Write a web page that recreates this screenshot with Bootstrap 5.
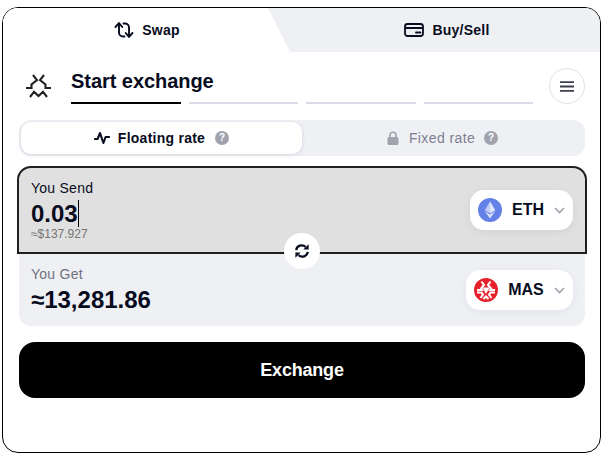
<!DOCTYPE html>
<html lang="en">
<head>
<meta charset="utf-8">
<title>Swap</title>
<link rel="stylesheet" href="https://cdn.jsdelivr.net/npm/bootstrap@5.3.0/dist/css/bootstrap.min.css">
<style>
html,body{margin:0;height:456px;overflow:hidden;background:#fff}
body{padding:7px 2px 2px;font-family:"Liberation Sans",Arial,sans-serif;color:#080c1e}
.wdg{width:599px;height:446px;border:1px solid #000;border-radius:16px;overflow:hidden;background:#fff}
.tabbar{height:44px;background:#eff0f4}
.tab-on{width:288px;background:#fff;clip-path:polygon(0 0,265px 0,287px 44px,0 44px)}
.tab-off{padding-left:3px}
.tabtxt{font-size:14px;font-weight:700;letter-spacing:.25px}
.bodyarea{padding:16px 15px 0 16px}
.logoicon{width:28px;height:28px;margin:4px 0 0 6px}
.head{height:36px}
.stepwrap{width:462px;margin-left:18px}
.steptitle{font-size:20px;font-weight:700;line-height:24px;margin-top:1px;padding-bottom:9px;letter-spacing:-.05px}
.steprow{gap:8px}
.stepbar{height:2px;background:#d9dbe6;flex:1 1 0}
.stepbar.on{background:#000}
.menuround{width:36px;height:36px;border:1px solid #dfe0e9;border-radius:50%;background:#fff;padding:0}
.ratebox{height:36px;background:#eff0f4;border-radius:12px;padding:2px;margin-top:16px}
.rate-on{width:281px;background:#fff;border-radius:10px;box-shadow:0 1px 4px rgba(30,35,70,.12);font-size:14px;font-weight:700;letter-spacing:.25px}
.rate-off{font-size:14px;color:#7d7f91;letter-spacing:.4px}
.qmark{width:14px;height:14px;border-radius:50%;background:#a1a2ad;color:#fff;font-size:10px;font-weight:700;line-height:14px;text-align:center;letter-spacing:0;margin-left:2px}
.rate-off .qmark{margin-left:1px}
.lockico{margin-right:2px}
.swapbox{margin-top:10px}
.sendpane{height:88px;margin:0 -2px;background:#e0e0e0;border:2px solid #1f1f1f;border-radius:14px 14px 0 0;padding:0 12px 0 12px}
.getpane{height:72px;background:#eff0f4;border-radius:0 0 12px 12px;padding:0 12px}
.lab{font-size:14px;line-height:16px;letter-spacing:.25px}
.lab-muted{color:#6f7180}
.send-lab{margin-top:12px}
.val-send{font-size:24px;font-weight:700;line-height:28px;margin-top:4px}
.caret-bar{display:inline-block;width:1px;height:27px;background:#000;vertical-align:top}
.usd{font-size:12px;line-height:13px;color:#747474;margin-top:0}
.val-get{font-size:24px;font-weight:700;line-height:28px;margin-top:4px}
.coinpill{height:40px;background:#fff;border-radius:14px;box-shadow:0 2px 8px rgba(30,35,70,.06);font-size:16px;font-weight:700}
.pill-eth{width:103px;padding:0 8px;margin-top:22px}
.pill-mas{width:107px;padding:0 8px;margin-top:16px}
.get-lab{margin-top:12px}
.coinicon{width:24px;height:24px}
.swapround{width:36px;height:36px;background:#fff;border-radius:50%;left:265px;top:67px;z-index:2}
.gobtn{height:56px;margin-top:16px;background:#000;border:0;border-radius:16px;font-size:18px;font-weight:700;color:#fff;width:100%;letter-spacing:-.2px}
.gobtn:hover{background:#000;color:#fff}
</style>
</head>
<body>
<div class="wdg">
  <div class="tabbar d-flex">
    <div class="tab-on d-flex align-items-center justify-content-center gap-2">
      <svg width="20" height="20" viewBox="0 0 20 20" fill="none" stroke="#080c1e" stroke-width="1.9" stroke-linecap="round" stroke-linejoin="round"><path d="M1.5 7 5 3.2 8.3 7"/><path d="M5 3.5V12.5a4 4 0 0 0 4 4h1.5"/><path d="M11.7 13 15 16.8 18.5 13"/><path d="M15 16.5V7.5a4 4 0 0 0-4-4H9.5"/></svg>
      <span class="tabtxt">Swap</span>
    </div>
    <div class="tab-off flex-grow-1 d-flex align-items-center justify-content-center gap-2">
      <svg width="20" height="16" viewBox="0 0 20 16" fill="none" stroke="#080c1e" stroke-width="1.8" stroke-linejoin="round"><rect x="1" y="2" width="18" height="12" rx="2.5"/><path d="M1 6h18"/><path d="M12 10.5h1.6M15 10.5h1.5" stroke-linecap="round"/></svg>
      <span class="tabtxt">Buy/Sell</span>
    </div>
  </div>
  <div class="bodyarea">
    <div class="head d-flex align-items-start">
      <svg class="logoicon flex-shrink-0" viewBox="0 0 28 28" fill="none" stroke="#222" stroke-width="2.1" stroke-linejoin="miter"><path d="M8 3 12 8 6.5 12.5V16H1"/><path d="M19 3 15 8 20.5 12.5V16H26"/><path d="M5 25 9 19.7 13.5 24 18 19.7 22 25"/></svg>
      <div class="stepwrap flex-shrink-0">
        <div class="steptitle">Start exchange</div>
        <div class="d-flex steprow">
          <div class="stepbar on"></div><div class="stepbar"></div><div class="stepbar"></div><div class="stepbar"></div>
        </div>
      </div>
      <button class="menuround ms-auto d-flex align-items-center justify-content-center" type="button" aria-label="Menu">
        <svg width="14" height="11" viewBox="0 0 14 11" fill="none" stroke="#3d3f4d" stroke-width="1.8"><path d="M0 1.2h14M0 5.5h14M0 9.8h14"/></svg>
      </button>
    </div>
    <div class="ratebox d-flex">
      <div class="rate-on d-flex align-items-center justify-content-center gap-2">
        <svg width="16" height="14" viewBox="0 0 16 14" fill="none" stroke="#080c1e" stroke-width="2.1" stroke-linejoin="round" stroke-linecap="round"><path d="M1 8h2.6L6 2l3.4 10 2.2-6H15"/></svg>
        <span>Floating rate</span><span class="qmark">?</span>
      </div>
      <div class="rate-off flex-grow-1 d-flex align-items-center justify-content-center gap-2">
        <svg class="lockico" width="12" height="14" viewBox="0 0 12 14"><path d="M3 6V4.2a3 3 0 0 1 6 0V6" fill="none" stroke="#a1a2ad" stroke-width="1.6"/><rect x="0.5" y="6" width="11" height="8" rx="1.5" fill="#a1a2ad"/></svg>
        <span>Fixed rate</span><span class="qmark">?</span>
      </div>
    </div>
    <div class="swapbox position-relative">
      <div class="sendpane d-flex justify-content-between align-items-start">
        <div>
          <div class="lab send-lab">You Send</div>
          <div class="val-send">0.03<span class="caret-bar"></span></div>
          <div class="usd">≈$137.927</div>
        </div>
        <div class="coinpill pill-eth d-flex align-items-center justify-content-between">
          <svg class="coinicon" viewBox="0 0 24 24"><circle cx="12" cy="12" r="12" fill="#6481e7"/><path d="M12 3.5 6.8 12.2 12 15.2 17.2 12.2Z" fill="#c1ccf5"/><path d="M12 3.5V15.2L17.2 12.2Z" fill="#dfe5fb"/><path d="M6.8 13.3 12 20.5 17.2 13.3 12 16.4Z" fill="#dfe5fb"/></svg>
          <span>ETH</span>
          <svg width="11" height="7" viewBox="0 0 11 7" fill="none" stroke="#a1a2ad" stroke-width="1.6"><path d="M1 1l4.5 4.5L10 1"/></svg>
        </div>
      </div>
      <div class="swapround position-absolute d-flex align-items-center justify-content-center">
        <svg width="16" height="16" viewBox="0 0 16 16" fill="none" stroke="#080c1e" stroke-width="2.3" stroke-linejoin="miter"><path d="M2.2 7.2A5.6 5.6 0 0 1 11.5 3.8"/><path d="M14.6 1.3V6.6H9.3Z" fill="#080c1e" stroke="none"/><path d="M13.8 8.8A5.6 5.6 0 0 1 4.5 12.2"/><path d="M1.4 14.7V9.4H6.7Z" fill="#080c1e" stroke="none"/></svg>
      </div>
      <div class="getpane d-flex justify-content-between align-items-start">
        <div>
          <div class="lab lab-muted get-lab">You Get</div>
          <div class="val-get">≈13,281.86</div>
        </div>
        <div class="coinpill pill-mas d-flex align-items-center justify-content-between">
          <svg class="coinicon" viewBox="0 0 24 24"><circle cx="12" cy="12" r="12" fill="#e7212a"/><g fill="none" stroke="#fff" stroke-width="2.1"><path d="M7.5 3.5 10 7 7 10.5 8 12H3"/><path d="M16.5 3.5 14 7 17 10.5 16 12H21"/><path d="M3 14.5H7.5L9 16.5 6.5 20"/><path d="M21 14.5H16.5L15 16.5 17.5 20"/><path d="M9.5 21 12 18.5 14.5 21"/></g><path d="M8.5 9.5H15.5L12 16Z" fill="#fff"/></svg>
          <span>MAS</span>
          <svg width="11" height="7" viewBox="0 0 11 7" fill="none" stroke="#a1a2ad" stroke-width="1.6"><path d="M1 1l4.5 4.5L10 1"/></svg>
        </div>
      </div>
    </div>
    <button class="btn gobtn" type="button">Exchange</button>
  </div>
</div>
<script src="https://cdn.jsdelivr.net/npm/bootstrap@5.3.0/dist/js/bootstrap.bundle.min.js"></script>
</body>
</html>
